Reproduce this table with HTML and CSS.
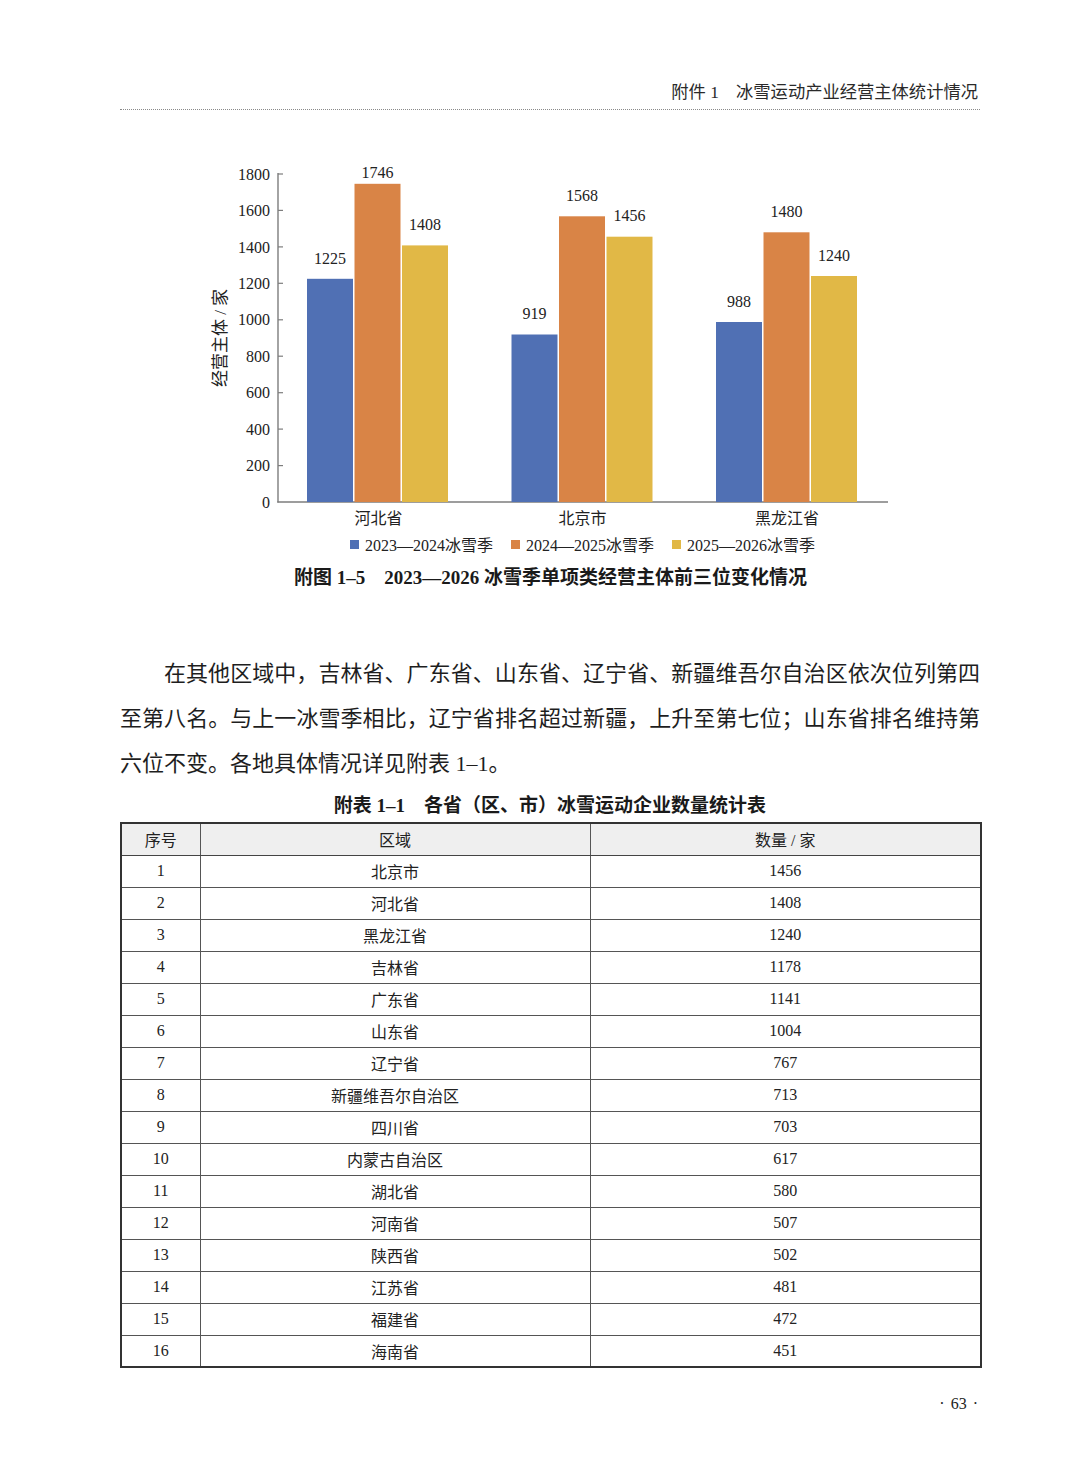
FILE: index.html
```html
<!DOCTYPE html>
<html lang="zh-CN">
<head>
<meta charset="utf-8">
<title>附件1 冰雪运动产业经营主体统计情况</title>
<link rel="stylesheet" href="styles.css">
</head>
<body>
<div class="page">
  <header class="running-head">附件 1　冰雪运动产业经营主体统计情况</header>

  <figure class="figure">
    <svg class="chart" width="860" height="410" viewBox="120 150 860 410" xmlns="http://www.w3.org/2000/svg">
      <!-- axes -->
      <line class="axis" x1="278" y1="173" x2="278" y2="502.5"/>
      <line class="axis" x1="277.3" y1="502" x2="888" y2="502"/>
      <g class="ticks">
        <line x1="278" y1="174" x2="283" y2="174"/>
        <line x1="278" y1="210.4" x2="283" y2="210.4"/>
        <line x1="278" y1="246.9" x2="283" y2="246.9"/>
        <line x1="278" y1="283.3" x2="283" y2="283.3"/>
        <line x1="278" y1="319.8" x2="283" y2="319.8"/>
        <line x1="278" y1="356.2" x2="283" y2="356.2"/>
        <line x1="278" y1="392.7" x2="283" y2="392.7"/>
        <line x1="278" y1="429.1" x2="283" y2="429.1"/>
        <line x1="278" y1="465.6" x2="283" y2="465.6"/>
      </g>
      <g class="tick-labels">
        <text x="270" y="174" dy="0.35em">1800</text>
        <text x="270" y="210.4" dy="0.35em">1600</text>
        <text x="270" y="246.9" dy="0.35em">1400</text>
        <text x="270" y="283.3" dy="0.35em">1200</text>
        <text x="270" y="319.8" dy="0.35em">1000</text>
        <text x="270" y="356.2" dy="0.35em">800</text>
        <text x="270" y="392.7" dy="0.35em">600</text>
        <text x="270" y="429.1" dy="0.35em">400</text>
        <text x="270" y="465.6" dy="0.35em">200</text>
        <text x="270" y="502" dy="0.35em">0</text>
      </g>
      <text class="y-title" transform="translate(220 338) rotate(-90)" dy="0.35em">经营主体 / 家</text>

      <!-- group 1: 河北省 -->
      <rect class="s1" x="307" y="278.8" width="46" height="223.2"/>
      <rect class="s2" x="354.5" y="183.8" width="46" height="318.2"/>
      <rect class="s3" x="402" y="245.4" width="46" height="256.6"/>
      <!-- group 2: 北京市 -->
      <rect class="s1" x="511.5" y="334.5" width="46" height="167.5"/>
      <rect class="s2" x="559" y="216.3" width="46" height="285.7"/>
      <rect class="s3" x="606.5" y="236.7" width="46" height="265.3"/>
      <!-- group 3: 黑龙江省 -->
      <rect class="s1" x="716" y="322" width="46" height="180"/>
      <rect class="s2" x="763.5" y="232.3" width="46" height="269.7"/>
      <rect class="s3" x="811" y="276" width="46" height="226"/>

      <g class="val">
        <text x="330" y="258" dy="0.35em">1225</text>
        <text x="377.5" y="172" dy="0.35em">1746</text>
        <text x="425" y="224.5" dy="0.35em">1408</text>
        <text x="534.5" y="313.5" dy="0.35em">919</text>
        <text x="582" y="195.3" dy="0.35em">1568</text>
        <text x="629.5" y="215.7" dy="0.35em">1456</text>
        <text x="739" y="301" dy="0.35em">988</text>
        <text x="786.5" y="211.3" dy="0.35em">1480</text>
        <text x="834" y="255" dy="0.35em">1240</text>
      </g>

      <g class="cat">
        <text x="378.5" y="518" dy="0.35em">河北省</text>
        <text x="582.5" y="518" dy="0.35em">北京市</text>
        <text x="787" y="518" dy="0.35em">黑龙江省</text>
      </g>

      <g class="legend">
        <rect class="s1" x="350" y="540" width="9" height="9"/>
        <text x="365" y="545" dy="0.35em">2023—2024冰雪季</text>
        <rect class="s2" x="511" y="540" width="9" height="9"/>
        <text x="526" y="545" dy="0.35em">2024—2025冰雪季</text>
        <rect class="s3" x="672" y="540" width="9" height="9"/>
        <text x="687" y="545" dy="0.35em">2025—2026冰雪季</text>
      </g>
    </svg>
    <figcaption class="caption">附图 1–5　2023—2026 冰雪季单项类经营主体前三位变化情况</figcaption>
  </figure>

  <p class="para">
    <span class="jl first">在其他区域中，吉林省、广东省、山东省、辽宁省、新疆维吾尔自治区依次位列第四</span>
    <span class="jl">至第八名。与上一冰雪季相比，辽宁省排名超过新疆，上升至第七位；山东省排名维持第</span>
    <span class="ll">六位不变。各地具体情况详见附表 1–1。</span>
  </p>

  <div class="table-title">附表 1–1　各省（区、市）冰雪运动企业数量统计表</div>
  <table class="data">
    <colgroup>
      <col class="c1"><col class="c2"><col class="c3">
    </colgroup>
    <thead>
      <tr><th>序号</th><th>区域</th><th>数量 / 家</th></tr>
    </thead>
    <tbody>
      <tr><td>1</td><td>北京市</td><td>1456</td></tr>
      <tr><td>2</td><td>河北省</td><td>1408</td></tr>
      <tr><td>3</td><td>黑龙江省</td><td>1240</td></tr>
      <tr><td>4</td><td>吉林省</td><td>1178</td></tr>
      <tr><td>5</td><td>广东省</td><td>1141</td></tr>
      <tr><td>6</td><td>山东省</td><td>1004</td></tr>
      <tr><td>7</td><td>辽宁省</td><td>767</td></tr>
      <tr><td>8</td><td>新疆维吾尔自治区</td><td>713</td></tr>
      <tr><td>9</td><td>四川省</td><td>703</td></tr>
      <tr><td>10</td><td>内蒙古自治区</td><td>617</td></tr>
      <tr><td>11</td><td>湖北省</td><td>580</td></tr>
      <tr><td>12</td><td>河南省</td><td>507</td></tr>
      <tr><td>13</td><td>陕西省</td><td>502</td></tr>
      <tr><td>14</td><td>江苏省</td><td>481</td></tr>
      <tr><td>15</td><td>福建省</td><td>472</td></tr>
      <tr><td>16</td><td>海南省</td><td>451</td></tr>
    </tbody>
  </table>

  <div class="folio">·&nbsp;63&nbsp;·</div>
</div>
</body>
</html>
```

FILE: styles.css
```css
html, body {
  margin: 0;
  padding: 0;
  background: #ffffff;
}

body {
  font-family: "Liberation Serif", "Noto Sans CJK SC", serif;
  color: #1e1e1e;
}

.page {
  width: 860px;
  margin: 0 0 0 120px;
  padding: 81px 0 40px;
  box-sizing: content-box;
}

.running-head {
  font-size: 17.3px;
  line-height: 24px;
  text-align: right;
  padding-right: 2px;
  padding-bottom: 4px;
  border-bottom: 1px dotted #8a8a8a;
  color: #2a2a2a;
}

.figure {
  margin: 40px 0 0;
  padding: 0;
}

.chart {
  display: block;
}

.chart text {
  font-family: "Liberation Serif", "Noto Sans CJK SC", serif;
  fill: #222;
}

.axis {
  stroke: #7d7d7d;
  stroke-width: 1.4;
}

.ticks line {
  stroke: #7d7d7d;
  stroke-width: 1.2;
}

.tick-labels text {
  font-size: 16px;
  text-anchor: end;
}

.y-title {
  font-size: 17px;
  text-anchor: middle;
  fill: #333;
}

.val text {
  font-size: 16px;
  text-anchor: middle;
}

.cat text {
  font-size: 16px;
  text-anchor: middle;
}

.legend text {
  font-size: 16px;
}

.s1 { fill: #5070b4; }
.s2 { fill: #d98446; }
.s3 { fill: #e1b846; }

.caption {
  margin-top: 5px;
  font-size: 19px;
  line-height: 26px;
  font-weight: bold;
  text-align: center;
  padding-left: 1px;
  color: #1a1a1a;
}

.para {
  margin: 60px 0 0;
  font-size: 22px;
  line-height: 45px;
  color: #1e1e1e;
}

.jl {
  display: block;
  text-align: justify;
  text-align-last: justify;
}

.jl.first {
  text-indent: 44px;
}

.ll {
  display: block;
}

.table-title {
  margin-top: 7px;
  font-size: 19px;
  line-height: 26px;
  font-weight: bold;
  text-align: center;
  color: #1a1a1a;
}

.data {
  margin-top: 3px;
  width: 860px;
  border-collapse: collapse;
  border: 2px solid #333;
  table-layout: fixed;
  font-size: 16px;
}

.data col.c1 { width: 79px; }
.data col.c2 { width: 390px; }
.data col.c3 { width: 391px; }

.data tr {
  height: 32px;
}

.data th,
.data td {
  border: 1px solid #555;
  padding: 0;
  text-align: center;
  vertical-align: middle;
  font-weight: normal;
  color: #222;
}

.data thead th {
  background: #efefef;
  border-bottom: 1.5px solid #444;
}

.folio {
  margin-top: 26px;
  font-size: 16px;
  line-height: 20px;
  text-align: right;
  padding-right: 2px;
  word-spacing: 2px;
  color: #222;
}
```
